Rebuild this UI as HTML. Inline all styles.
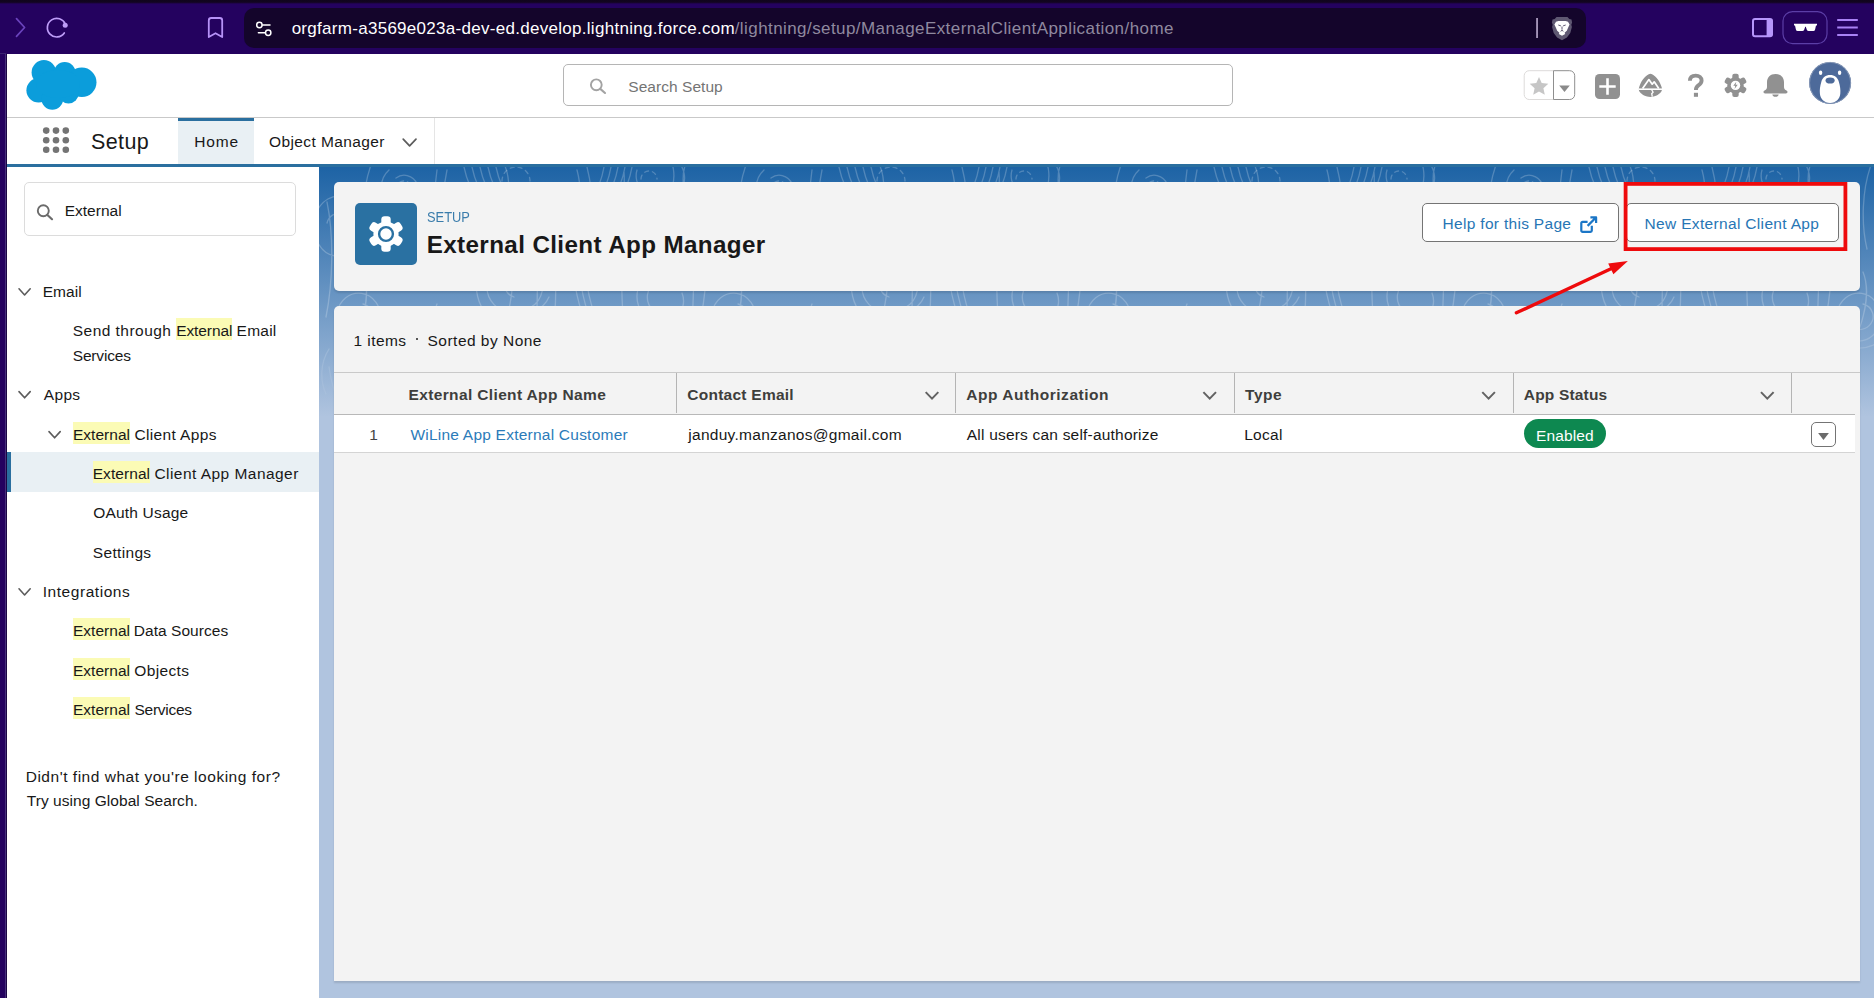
<!DOCTYPE html>
<html>
<head>
<meta charset="utf-8">
<title>External Client App Manager</title>
<style>
*{box-sizing:border-box;margin:0;padding:0}
html,body{width:1874px;height:998px;overflow:hidden;background:#fff}
body{font-family:"Liberation Sans",sans-serif;color:#181818;position:relative}
.a{position:absolute}
.t{position:absolute;white-space:nowrap;line-height:1;font-size:15.5px;transform-origin:0 0}
svg{position:absolute;overflow:visible}
/* browser chrome */
#chrome{left:0;top:0;width:1874px;height:54px;background:#24025f}
#chrome-top{left:0;top:0;width:1874px;height:4px;background:linear-gradient(180deg,#10041d 0,#12051f 55%,#24025f 100%)}
#lstripe{left:0;top:54px;width:7px;height:944px;background:linear-gradient(90deg,#24025f 0,#24025f 5px,#46317a 5px,#46317a 6px,#1c0645 6px)}
#lstripe2{left:0;top:53px;width:6px;height:1px;background:#3a2370}
#urlbar{left:244px;top:8px;width:1342px;height:40px;border-radius:10px;background:#14052b}
/* salesforce header */
#gheader{left:7px;top:54px;width:1867px;height:64px;background:#fff;border-bottom:1px solid #c9c9c9}
#gsearch{left:563px;top:64px;width:670px;height:42px;border:1px solid #b5b5b5;border-radius:5px;background:#fff}
#nav{left:7px;top:118px;width:1867px;height:49px;background:#fff;border-bottom:3px solid #2a6f9f}
#hometab{left:178px;top:118px;width:76px;height:46px;background:#e9f0f4;border-top:3px solid #2a6f9f}
#omsep{left:434px;top:118px;width:1px;height:46px;background:#e5e5e5}
/* sidebar */
#side{left:7px;top:167px;width:312px;height:831px;background:#fff}
#sidesearch{left:24px;top:182px;width:272px;height:54px;border:1px solid #dcdcdc;border-radius:5px;background:#fff}
#selrow{left:7px;top:452px;width:312px;height:40px;background:#e9f0f4}
#selbar{left:7px;top:452px;width:4px;height:40px;background:#2a6f9f}
.hl{background:#fbfbb5}
/* main */
#main{left:319px;top:167px;width:1555px;height:831px;background:#b0c4df linear-gradient(180deg,#1d63a5 0px,rgba(176,196,223,0) 250px) no-repeat}
.card{background:#f3f3f3;border-radius:5px;box-shadow:0 2px 2px rgba(0,0,0,.12)}
#card1{left:334px;top:182px;width:1526px;height:109px}
#card2{left:334px;top:306px;width:1526px;height:675px;border-radius:5px 5px 0 0}
#pgicon{left:355px;top:203px;width:62px;height:62px;border-radius:5px;background:#2a71a2}
.btn{background:#fff;border:1px solid #747474;border-radius:5px;height:39px;top:203px}
#thead-top{left:334px;top:372px;width:1526px;height:1px;background:#c9c9c9}
#thead-bot{left:334px;top:414px;width:1521px;height:1px;background:#b8b8b8}
#row{left:334px;top:415px;width:1521px;height:38px;background:#fff;border-bottom:1px solid #d4d4d4}
.csep{top:373px;width:1px;height:40px;background:#b4b4b4}
#badge{left:1524px;top:419px;width:82px;height:29px;border-radius:15px;background:#0d8850}
#rowbtn{left:1811px;top:422px;width:25px;height:25px;border:1px solid #747474;border-radius:5px;background:#fff}
.th{font-weight:bold;color:#3e3e3c}
.lnk{color:#2574a9}
</style>
</head>
<body>
<!-- BROWSER CHROME -->
<div class="a" id="chrome"></div>
<div class="a" id="chrome-top"></div>
<div class="a" id="lstripe"></div>
<div class="a" id="lstripe2"></div>
<div class="a" id="urlbar"></div>
<svg class="a" style="left:0;top:0" width="1874" height="54" viewBox="0 0 1874 54" fill="none">
  <!-- forward chevron (disabled) -->
  <path d="M16.5 18.6 L24.6 27.5 L16.5 36.4" stroke="#6a43bd" stroke-width="1.7" stroke-linecap="round" stroke-linejoin="round"/>
  <!-- reload -->
  <path d="M65.3 24.2 A9.3 9.3 0 1 0 64.3 33.0" stroke="#be9df8" stroke-width="1.7" stroke-linecap="round"/>
  <circle cx="65.2" cy="25.2" r="2.5" fill="#be9df8"/>
  <!-- bookmark -->
  <path d="M208.8 20.4 a2.4 2.4 0 0 1 2.4 -2.4 h8.6 a2.4 2.4 0 0 1 2.4 2.4 V37 L215.5 33.2 L208.8 37 Z" stroke="#b692f7" stroke-width="1.8" stroke-linejoin="round"/>
  <!-- tune icon -->
  <circle cx="259.4" cy="25" r="2.7" stroke="#fff" stroke-width="1.5"/>
  <path d="M262.6 25 H270" stroke="#fff" stroke-width="1.5" stroke-linecap="round"/>
  <circle cx="268.2" cy="32.8" r="2.7" stroke="#fff" stroke-width="1.5"/>
  <path d="M258.4 32.8 H265" stroke="#fff" stroke-width="1.5" stroke-linecap="round"/>
  <!-- separator -->
  <rect x="1536.2" y="18" width="1.7" height="20" fill="#b3a4c6"/>
  <!-- brave lion -->
  <path d="M1556.5 17 h11 l1.8 2 l2.2 0.6 l0.6 3 l-0.8 2.2 l0.6 2.2 l-1.6 6 l-3.4 4.4 l-4.9 2.8 l-4.9 -2.8 l-3.4 -4.4 l-1.6 -6 l0.6 -2.2 l-0.8 -2.2 l0.6 -3 l2.2 -0.6 z" fill="#5f5872"/>
  <path d="M1562 21 l3.6 0 l2.4 0.8 l1.6 2.6 l-1.4 3 l-1.4 3.4 l-2.2 2 l0.6 1.2 l-3.2 1.8 l-3.2 -1.8 l0.6 -1.2 l-2.2 -2 l-1.4 -3.4 l-1.4 -3 l1.6 -2.6 l2.4 -0.8 z" fill="#fff"/>
  <path d="M1558.3 25 l2.6 0.9 M1565.7 25 l-2.6 0.9 M1562 26.5 v3.2 M1560.6 31.3 l1.4 -1 l1.4 1" stroke="#5f5872" stroke-width="1"/>
  <!-- sidebar panel icon -->
  <rect x="1753" y="19" width="19" height="17.2" rx="2" stroke="#b696fb" stroke-width="2"/>
  <path d="M1766.6 19 h4 a2 2 0 0 1 2 2 v13.2 a2 2 0 0 1 -2 2 h-4 z" fill="#b696fb"/>
  <!-- leo / glasses button -->
  <rect x="1783" y="11.6" width="44" height="32" rx="9.5" stroke="#5b3ea6" stroke-width="1.2"/>
  <path d="M1794 23.8 h23 v1.6 h-1 l-0.9 4.2 q-0.3 1.5 -1.8 1.5 h-4.6 q-1.4 0 -1.9 -1.4 l-1 -3 h-0.6 l-1 3 q-0.5 1.4 -1.9 1.4 h-4.6 q-1.5 0 -1.8 -1.5 l-0.9 -4.2 h-1 z" fill="#fff"/>
  <!-- hamburger -->
  <path d="M1837.2 20 H1857.8 M1837.2 27.5 H1857.8 M1837.2 35 H1857.8" stroke="#a982f5" stroke-width="2"/>
</svg>



<!-- SALESFORCE HEADER -->
<div class="a" id="gheader"></div>
<div class="a" id="gsearch"></div>
<svg class="a" style="left:0;top:54px" width="1874" height="64" viewBox="0 54 1874 64" fill="none">
  <!-- salesforce cloud -->
  <g fill="#0b9ddb">
    <circle cx="43.9" cy="72.4" r="12.3"/>
    <circle cx="64.7" cy="73" r="10.9"/>
    <circle cx="81.8" cy="82.3" r="14.7"/>
    <circle cx="38.6" cy="90.3" r="12.2"/>
    <circle cx="52.3" cy="98.8" r="10.9"/>
    <circle cx="68.5" cy="93.2" r="10.2"/>
    <ellipse cx="58" cy="84" rx="22" ry="14"/>
  </g>
  <!-- global search magnifier -->
  <circle cx="596.3" cy="84.8" r="5.4" stroke="#a3a3a3" stroke-width="1.9"/>
  <path d="M600.3 88.9 L605 93" stroke="#a3a3a3" stroke-width="2.1" stroke-linecap="round"/>
  <!-- favorites -->
  <path d="M1553.5 70.7 h-24.3 a5 5 0 0 0 -5 5 v18.8 a5 5 0 0 0 5 5 h24.3" stroke="#dddbda" stroke-width="1"/>
  <path d="M1553.5 70.7 h16.2 a5 5 0 0 1 5 5 v18.8 a5 5 0 0 1 -5 5 h-16.2 z" stroke="#8f8f8f" stroke-width="1" fill="#fff"/>
  <path d="M1539 77 l2.7 6.1 l6.6 0.7 l-4.9 4.5 l1.4 6.5 l-5.8 -3.3 l-5.8 3.3 l1.4 -6.5 l-4.9 -4.5 l6.6 -0.7 z" fill="#c6c6c6"/>
  <path d="M1559.2 85.4 h10.6 l-5.3 6.6 z" fill="#8a8a8a"/>
  <!-- global actions plus -->
  <rect x="1595" y="74" width="25" height="25" rx="4.5" fill="#919191"/>
  <path d="M1607.5 78.3 V94.7 M1599.3 86.5 H1615.7" stroke="#fff" stroke-width="2.6"/>
  <!-- trailhead -->
  <path d="M1650.4 73.8 c4.5 1.2 8.6 5.4 11.2 13.2 c0.6 2 0.5 3.6 -0.6 5 c-2 2.6 -6 4.9 -10.6 4.9 c-4.6 0 -8.600 -2.300 -10.600 -4.900 c-1.1 -1.4 -1.2 -3 -0.6 -5 c2.600 -7.800 6.700 -12 11.200 -13.200 z" fill="#919191"/>
  <path d="M1638.6 89.2 H1662.2" stroke="#fff" stroke-width="1.6"/>
  <path d="M1642.6 88.6 L1648.9 79.6 L1652.2 84.2 L1654.2 81.8 L1658.8 88.6" stroke="#fff" stroke-width="1.7" stroke-linejoin="round"/>
  <path d="M1651.5 89.5 l1.6 2.6 l-1.4 1.6 l0.6 3" stroke="#fff" stroke-width="1.3"/>
  <!-- help ? -->
  <path d="M1689.900 80.800 c0.100 -3.600 2.500 -5.200 5.800 -5.200 c3.500 0 5.900 1.900 5.900 4.900 c0 2.500 -1.400 3.700 -3.200 4.900 c-1.700 1.200 -2.500 2.200 -2.500 4.600" stroke="#919191" stroke-width="3.900"/>
  <rect x="1693.900" y="92.800" width="4.100" height="4" fill="#919191"/>
  <!-- setup gear -->
  <g transform="translate(1735.500 85.400)" fill="#919191">
    <circle r="8.200"/>
    <g id="hgt"><rect x="-3.200" y="-11.600" width="6.400" height="7" rx="2"/></g>
    <use href="#hgt" transform="rotate(60)"/><use href="#hgt" transform="rotate(120)"/><use href="#hgt" transform="rotate(180)"/><use href="#hgt" transform="rotate(240)"/><use href="#hgt" transform="rotate(300)"/>
    <circle r="4.700" fill="#fff"/>
    <path d="M0.800 -3.600 l-3 4 h2 l-0.800 3.200 l3.200 -4.200 h-2.100 z" fill="#919191"/>
  </g>
  <!-- bell -->
  <path d="M1775.500 74 c5.200 0 8.500 3.500 8.500 8.200 v4.800 c0 1.600 0.700 2.600 2.100 3.200 c1 0.500 1.400 1 1.400 1.900 c0 0.900 -0.600 1.400 -1.600 1.400 h-20.800 c-1 0 -1.600 -0.500 -1.600 -1.400 c0 -0.900 0.400 -1.400 1.400 -1.900 c1.400 -0.600 2.100 -1.600 2.100 -3.200 v-4.800 c0 -4.700 3.300 -8.200 8.500 -8.200 z" fill="#919191"/>
  <path d="M1772.300 94.500 h6.400 c-0.300 1.500 -1.500 2.300 -3.200 2.300 c-1.700 0 -2.900 -0.800 -3.200 -2.300 z" fill="#919191"/>
  <!-- avatar -->
  <circle cx="1830.1" cy="82.900" r="21" fill="#4d6a9a"/>
  <circle cx="1830.1" cy="82.900" r="20.500" stroke="#8a9bb8" stroke-width="0.900"/>
  <ellipse cx="1820.6" cy="72.700" rx="1.700" ry="2.200" fill="#fff"/>
  <ellipse cx="1839.6" cy="72.700" rx="1.700" ry="2.200" fill="#fff"/>
  <path d="M1830.1 75.100 C1834.6 75.100 1837.6999999999998 77.500 1838.8999999999999 82 C1840.1 86 1840.6999999999998 90 1840.3 93.500 C1839.8999999999999 98.800 1836.1 102.900 1830.1 102.900 C1824.1 102.900 1820.3 98.800 1819.8999999999999 93.500 C1819.5 90 1820.1 86 1821.3 82 C1822.5 77.500 1825.6 75.100 1830.1 75.100 Z" fill="#fff"/>
  <ellipse cx="1830.1" cy="80.500" rx="4.600" ry="3.100" fill="#4d6a9a"/>
</svg>

<div class="a" id="nav"></div>
<div class="a" id="hometab"></div>
<div class="a" id="omsep"></div>
<svg class="a" style="left:0;top:118px" width="460" height="48" viewBox="0 118 460 48" fill="none">
  <g fill="#747474">
    <circle cx="46.200" cy="130.600" r="3.300"/><circle cx="56" cy="130.600" r="3.300"/><circle cx="65.800" cy="130.600" r="3.300"/>
    <circle cx="46.200" cy="140.200" r="3.300"/><circle cx="56" cy="140.200" r="3.300"/><circle cx="65.800" cy="140.200" r="3.300"/>
    <circle cx="46.200" cy="149.800" r="3.300"/><circle cx="56" cy="149.800" r="3.300"/><circle cx="65.800" cy="149.800" r="3.300"/>
  </g>
  <path d="M403.200 139.200 L409.600 145.800 L416 139.200" stroke="#5c5c5c" stroke-width="1.700" stroke-linecap="round" stroke-linejoin="round"/>
</svg>


<!-- SIDEBAR -->
<div class="a" id="side"></div>
<div class="a" id="sidesearch"></div>
<div class="a" id="selrow"></div>
<div class="a" id="selbar"></div>
<div class="a hl" style="left:176px;top:318px;width:56.200px;height:21.500px"></div>
<div class="a hl" style="left:72.600px;top:422px;width:57.200px;height:22px"></div>
<div class="a hl" style="left:92.600px;top:461px;width:57.200px;height:22px"></div>
<div class="a hl" style="left:72.600px;top:618px;width:57.200px;height:22px"></div>
<div class="a hl" style="left:72.600px;top:657.600px;width:57.200px;height:22px"></div>
<div class="a hl" style="left:72.600px;top:697px;width:57.200px;height:22px"></div>
<svg class="a" style="left:7px;top:166px" width="312" height="832" viewBox="7 166 312 832" fill="none">
  <circle cx="43.300" cy="210.800" r="5.500" stroke="#6b6b6b" stroke-width="1.900"/>
  <path d="M47.400 215 L52 219.200" stroke="#6b6b6b" stroke-width="2.200" stroke-linecap="round"/>
  <g stroke="#5c5c5c" stroke-width="1.600" stroke-linecap="round" stroke-linejoin="round">
    <path d="M19 288.800 L24.600 295 L30.200 288.800"/>
    <path d="M19 391.600 L24.600 397.800 L30.200 391.600"/>
    <path d="M49 431.600 L54.600 437.800 L60.200 431.600"/>
    <path d="M19 588.800 L24.600 595 L30.200 588.800"/>
  </g>
</svg>


<!-- MAIN -->
<div class="a" id="main"></div>
<svg class="a" style="left:319px;top:167px;-webkit-mask-image:linear-gradient(180deg,#000 0,#000 55%,transparent 100%);mask-image:linear-gradient(180deg,#000 0,#000 55%,transparent 100%)" width="1555" height="260" viewBox="0 0 1555 260">
<defs><pattern id="bgp" width="375" height="260" patternUnits="userSpaceOnUse"><g fill="none" stroke="#fff" stroke-opacity=".22" stroke-width="1.300" stroke-linecap="round"><path d="M77 11A13 12 0 0 1 98 22M107 28A23 23 0 1 1 70 3M112 33A30 31 0 0 1 56 28M340 22A14 17 0 0 1 318 3M309 -4A24 30 0 1 1 349 28M351 -12A34 28 0 0 1 312 34M195 130A13 11 0 1 1 212 122M186 102A22 24 0 1 1 212 140M230 130A32 27 0 0 1 168 120M184 159A42 42 0 1 1 237 101M44 137A14 13 0 1 1 27 154M18 146A22 24 0 1 1 38 174M73 146A33 31 0 0 1 16 171M298 213A14 16 0 1 1 287 184M292 176A21 24 0 1 1 276 217M279 170A34 32 0 1 1 278 230M312 164A41 42 0 1 1 258 173M153 241A14 16 0 1 1 138 219M150 207A24 31 0 0 1 133 264M171 240A32 36 0 1 1 112 218M262 64A13 11 0 1 1 250 49M233 73A22 20 0 1 1 265 74M8 56A12 13 0 1 1 17 72M16 89A24 30 0 1 1 29 32M363 126A13 17 0 0 1 340 142M352 150A22 20 0 1 1 357 111M382 131A32 30 0 1 1 319 122M123 91A13 15 0 1 1 100 86M100 72A23 26 0 0 1 132 103M145 0q4 20 18 40M153 0q4 20 18 40M161 0q4 20 18 40M169 0q4 20 18 40M177 0q4 20 18 40M285 0q-3 18 -14 36M292 0q-3 18 -14 36M299 0q-3 18 -14 36M306 0q-3 18 -14 36M313 0q-3 18 -14 36M60 60q2 25 10 50M66 60q2 25 10 50M72 60q2 25 10 50M78 60q2 25 10 50M220 170q-4 22 -20 44M227 170q-4 22 -20 44M234 170q-4 22 -20 44M241 170q-4 22 -20 44M248 170q-4 22 -20 44M320 70q3 21 16 42M327 70q3 21 16 42M334 70q3 21 16 42M341 70q3 21 16 42M10 200q3 23 14 46M17 200q3 23 14 46M24 200q3 23 14 46M31 200q3 23 14 46M170 60q-2 19 -10 38M176 60q-2 19 -10 38M182 60q-2 19 -10 38M100 170q2 20 12 40M106 170q2 20 12 40M112 170q2 20 12 40M118 170q2 20 12 40M255 110q2 18 8 36M261 110q2 18 8 36M267 110q2 18 8 36M8 35c7 34 6 80 -1 115M10 182c-9 14 -9 32 -3 45M52 -2c-9 25 -10 59 -4 84M44 105c7 17 2 41 -4 58M118 3c-3 25 -8 59 4 84M118 137c-8 19 -8 44 -2 63M128 3c-7 35 -10 83 5 118M129 157c-9 14 1 33 6 47M222 33c-5 33 -3 76 -4 109M226 185c-3 20 -6 47 4 67M232 39c6 36 6 84 3 120M230 186c-9 20 -9 46 -3 66M258 3c9 33 -1 76 5 108M256 161c-6 26 -5 61 -4 88M268 0c8 31 7 73 -0 104M261 143c3 24 8 56 3 80M358 28c-6 28 6 65 -2 93M356 165c-2 27 9 62 3 89M366 -1c-7 21 8 48 4 69M374 92c3 24 -3 57 1 81M185 -3c9 18 3 43 0 61M191 106c7 19 -6 43 -3 62M305 5c2 23 -5 54 -1 77M303 105c-1 26 2 60 5 86"/><path d="M77 22a8 8 0 0 1 16 0M322 12a8 8 0 0 1 16 0M191 120a9 9 0 0 1 18 0M281 200a9 9 0 0 1 18 0M183 14a14 14 0 0 1 28 0" stroke-dasharray="4 4"/></g></pattern></defs>
<rect width="1555" height="260" fill="url(#bgp)"/>
</svg>

<div class="a card" id="card1"></div>
<div class="a card" id="card2"></div>
<div class="a" id="pgicon"></div>
<svg class="a" style="left:355px;top:203px" width="62" height="62" viewBox="-31 -31 62 62">
  <g fill="#fff">
    <circle r="12.600"/>
    <g id="pgt"><rect x="-4.700" y="-17.800" width="9.400" height="10" rx="3.300"/></g>
    <use href="#pgt" transform="rotate(60)"/><use href="#pgt" transform="rotate(120)"/><use href="#pgt" transform="rotate(180)"/><use href="#pgt" transform="rotate(240)"/><use href="#pgt" transform="rotate(300)"/>
  </g>
  <circle r="6.900" fill="none" stroke="#2a71a2" stroke-width="2.400"/>
</svg>
<div class="a btn" style="left:1422px;width:196.500px"></div>
<div class="a btn" style="left:1625.500px;width:213.500px"></div>
<svg class="a" style="left:1578px;top:213px" width="22" height="22" viewBox="1578 213 22 22" fill="none" stroke="#1b76c6" stroke-width="2.200" stroke-linejoin="round" stroke-linecap="butt">
  <path d="M1587.600 221.900 h-5 a1.300 1.300 0 0 0 -1.300 1.300 v7.300 a1.300 1.300 0 0 0 1.300 1.300 h7.900 a1.300 1.300 0 0 0 1.300 -1.300 v-4.700"/>
  <path d="M1590.400 217.400 h5.700 v5.700 M1595.700 217.800 L1587.600 225.900"/>
</svg>

<div class="a" id="thead-top"></div>
<div class="a" id="row"></div>
<div class="a" id="thead-bot"></div>
<div class="a csep" style="left:676px"></div>
<div class="a csep" style="left:955px"></div>
<div class="a csep" style="left:1234px"></div>
<div class="a csep" style="left:1513px"></div>
<div class="a csep" style="left:1791px"></div>
<div class="a" id="badge"></div>
<div class="a" id="rowbtn"></div>
<svg class="a" style="left:334px;top:372px" width="1525" height="80" viewBox="334 372 1525 80" fill="none">
  <g stroke="#626262" stroke-width="2" stroke-linecap="butt" stroke-linejoin="miter">
    <path d="M925.7 392.100 L932.0 398.600 L938.3 392.100"/>
    <path d="M1203.4 392.100 L1209.7 398.600 L1216.0 392.100"/>
    <path d="M1482.3 392.100 L1488.6 398.600 L1494.9 392.100"/>
    <path d="M1761.0 392.100 L1767.3 398.600 L1773.6 392.100"/>
  </g>
  <path d="M1818.100 433.100 h10.800 l-5.400 6.800 z" fill="#6b6b6b"/>
</svg>
<div class="a" style="left:416px;top:338.400px;width:2px;height:2px;background:#555"></div>

<span class="t" style="left:291.63px;top:20.00px;font-size:17px;letter-spacing:0.287px;color:#fff">orgfarm-a3569e023a-dev-ed.develop.lightning.force.com</span>
<span class="t" style="left:734.72px;top:20.00px;font-size:17px;letter-spacing:0.422px;color:#8f899f">/lightning/setup/ManageExternalClientApplication/home</span>
<span class="t" style="left:628.32px;top:79.00px;letter-spacing:0.041px;color:#747474">Search Setup</span>
<span class="t" style="left:90.92px;top:132.00px;font-size:21.5px;letter-spacing:0.420px;">Setup</span>
<span class="t" style="left:194.28px;top:134.00px;letter-spacing:0.841px;">Home</span>
<span class="t" style="left:268.94px;top:134.00px;letter-spacing:0.405px;">Object Manager</span>
<span class="t" style="left:64.64px;top:203.00px;letter-spacing:0.032px;">External</span>
<span class="t" style="left:42.70px;top:284.00px;letter-spacing:0.049px;">Email</span>
<span class="t" style="left:72.75px;top:323.00px;letter-spacing:0.465px;">Send through</span>
<span class="t" style="left:176.14px;top:323.00px;letter-spacing:-0.078px;">External</span>
<span class="t" style="left:236.59px;top:323.00px;letter-spacing:0.236px;">Email</span>
<span class="t" style="left:72.75px;top:348.00px;letter-spacing:-0.179px;">Services</span>
<span class="t" style="left:43.73px;top:387.00px;letter-spacing:0.356px;">Apps</span>
<span class="t" style="left:72.90px;top:427.00px;letter-spacing:0.032px;">External</span>
<span class="t" style="left:134.40px;top:427.00px;letter-spacing:0.363px;">Client Apps</span>
<span class="t" style="left:92.67px;top:466.00px;letter-spacing:0.075px;">External</span>
<span class="t" style="left:154.40px;top:466.00px;letter-spacing:0.461px;">Client App Manager</span>
<span class="t" style="left:93.14px;top:505.00px;letter-spacing:0.206px;">OAuth Usage</span>
<span class="t" style="left:92.75px;top:545.00px;letter-spacing:0.336px;">Settings</span>
<span class="t" style="left:42.67px;top:584.00px;letter-spacing:0.556px;">Integrations</span>
<span class="t" style="left:72.90px;top:623.00px;letter-spacing:0.032px;">External</span>
<span class="t" style="left:133.79px;top:623.00px;letter-spacing:0.047px;">Data Sources</span>
<span class="t" style="left:72.90px;top:663.00px;letter-spacing:0.032px;">External</span>
<span class="t" style="left:134.33px;top:663.00px;letter-spacing:0.361px;">Objects</span>
<span class="t" style="left:72.90px;top:702.00px;letter-spacing:0.032px;">External</span>
<span class="t" style="left:134.44px;top:702.00px;letter-spacing:-0.254px;">Services</span>
<span class="t" style="left:25.70px;top:769.00px;letter-spacing:0.525px;">Didn't find what you're looking for?</span>
<span class="t" style="left:26.77px;top:793.00px;letter-spacing:0.049px;">Try using Global Search.</span>
<span class="t" style="left:427.01px;top:210.00px;font-size:14.6px;transform:scaleX(0.8830);color:#3a7cab">SETUP</span>
<span class="t" style="left:426.73px;top:233.00px;font-size:24.2px;letter-spacing:0.390px;font-weight:bold;color:#181818">External Client App Manager</span>
<span class="t" style="left:1442.59px;top:216.00px;letter-spacing:0.306px;color:#2776b5">Help for this Page</span>
<span class="t" style="left:1644.59px;top:216.00px;letter-spacing:0.328px;color:#2776b5">New External Client App</span>
<span class="t" style="left:353.48px;top:333.00px;letter-spacing:0.442px;">1 items</span>
<span class="t" style="left:427.55px;top:333.00px;letter-spacing:0.479px;">Sorted by None</span>
<span class="t" style="left:408.52px;top:387.00px;letter-spacing:0.362px;font-weight:bold;color:#3e3e3c">External Client App Name</span>
<span class="t" style="left:687.30px;top:387.00px;letter-spacing:0.252px;font-weight:bold;color:#3e3e3c">Contact Email</span>
<span class="t" style="left:966.36px;top:387.00px;letter-spacing:0.527px;font-weight:bold;color:#3e3e3c">App Authorization</span>
<span class="t" style="left:1245.12px;top:387.00px;letter-spacing:0.471px;font-weight:bold;color:#3e3e3c">Type</span>
<span class="t" style="left:1523.79px;top:387.00px;letter-spacing:0.179px;font-weight:bold;color:#3e3e3c">App Status</span>
<span class="t" style="left:369.13px;top:427.00px;color:#444">1</span>
<span class="t" style="left:410.39px;top:427.00px;letter-spacing:0.230px;color:#2b7bb9">WiLine App External Customer</span>
<span class="t" style="left:688.29px;top:427.00px;letter-spacing:0.276px;">janduy.manzanos@gmail.com</span>
<span class="t" style="left:966.83px;top:427.00px;letter-spacing:0.199px;">All users can self-authorize</span>
<span class="t" style="left:1244.14px;top:427.00px;letter-spacing:0.289px;">Local</span>
<span class="t" style="left:1535.94px;top:428.00px;letter-spacing:0.143px;color:#fff">Enabled</span>
<svg class="a" style="left:0;top:0" width="1874" height="998" viewBox="0 0 1874 998" fill="none">
  <rect x="1625.600" y="183.900" width="219.800" height="65.200" stroke="#ee0a0c" stroke-width="3.800"/>
  <path d="M1516.400 312.800 L1611.500 268.500" stroke="#ee0a0c" stroke-width="3.400" stroke-linecap="round"/>
  <path d="M1627.900 260.900 L1608.200 263.400 L1613.400 274.300 Z" fill="#ee0a0c"/>
</svg>

</body>
</html>
